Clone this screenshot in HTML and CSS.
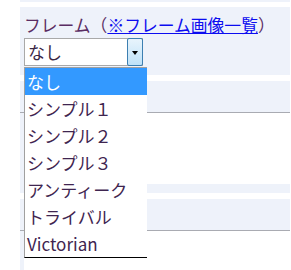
FILE: index.html
```html
<!DOCTYPE html>
<html lang="ja">
<head>
<meta charset="utf-8">
<link rel="stylesheet" href="styles.css">
</head>
<body>
<div class="page">
  <div class="sec sec-prev"></div>
  <div class="sec sec-frame">
    <div class="label">フレーム（<a href="#" class="link">※フレーム画像一覧</a>）</div>
    <div class="select-wrap">
      <div class="select">
        <span class="val">なし</span>
        <span class="btn"><span class="arrow"></span></span>
      </div>
      <ul class="list">
        <li class="item selected">なし</li>
        <li class="item">シンプル１</li>
        <li class="item">シンプル２</li>
        <li class="item">シンプル３</li>
        <li class="item">アンティーク</li>
        <li class="item">トライバル</li>
        <li class="item">Victorian</li>
      </ul>
    </div>
  </div>
  <div class="sec sec-block">
    <div class="head"></div>
    <div class="body body-c"></div>
  </div>
  <div class="sec sec-last">
    <div class="head"></div>
    <div class="body body-d"></div>
  </div>
</div>
</body>
</html>
```
FILE: styles.css
```css
html, body {
  margin: 0;
  padding: 0;
  background: #ffffff;
  font-family: "Noto Sans CJK JP", "Noto Sans", sans-serif;
}
.page {
  margin: 0 1px 0 20px;
}
.sec {
  background: #eef2fa;
}
.sec-prev {
  height: 2px;
  margin-bottom: 5px;
}
.sec-frame {
  height: 68px;
  box-sizing: border-box;
  padding: 7px 0 0 4px;
  margin-bottom: 6px;
}
.label {
  font-size: 16.8px;
  line-height: 23px;
  color: #5a2d63;
  white-space: nowrap;
}
.link {
  color: #0c0cf0;
  text-decoration: underline;
}
.select-wrap {
  position: relative;
  width: 119px;
  margin-top: 1px;
}
.select {
  height: 28px;
  box-sizing: border-box;
  border: 1px solid #a9a9a9;
  background: #ffffff;
  display: flex;
  align-items: center;
}
.val {
  flex: 1;
  padding-left: 3px;
  font-size: 17px;
  line-height: 26px;
  color: #3a2745;
}
.btn {
  align-self: stretch;
  width: 16px;
  margin: -1px -1px -1px 0;
  box-sizing: border-box;
  border: 1px solid #3c7fb1;
  border-radius: 2px;
  background: linear-gradient(#e8f4fc, #bfe2f8);
  display: flex;
  align-items: center;
  justify-content: center;
}
.arrow {
  width: 0;
  height: 0;
  border-top: 4px solid #000;
  border-left: 3.5px solid transparent;
  border-right: 3.5px solid transparent;
  margin-top: 1px;
}
.list {
  position: absolute;
  top: 29px;
  left: 0;
  width: 123px;
  margin: 0;
  padding: 0;
  list-style: none;
  box-sizing: border-box;
  background: #ffffff;
  border-left: 1px solid #a0a0a0;
  border-top: 1px solid #a0a0a0;
  border-bottom: 1px solid #000000;
  z-index: 10;
}
.item {
  height: 27px;
  line-height: 27px;
  padding-left: 2px;
  font-size: 17px;
  color: #3f2550;
  white-space: nowrap;
}
.item.selected {
  background: #3399ff;
  color: #ffffff;
}
.sec-block {
  padding-bottom: 9px;
  margin-bottom: 6px;
}
.head {
  height: 31px;
  border-bottom: 1px solid #a9abb2;
}
.body {
  margin-left: 4px;
  background: #ffffff;
}
.body-c {
  height: 71px;
}
.body-d {
  height: 39px;
}
```
